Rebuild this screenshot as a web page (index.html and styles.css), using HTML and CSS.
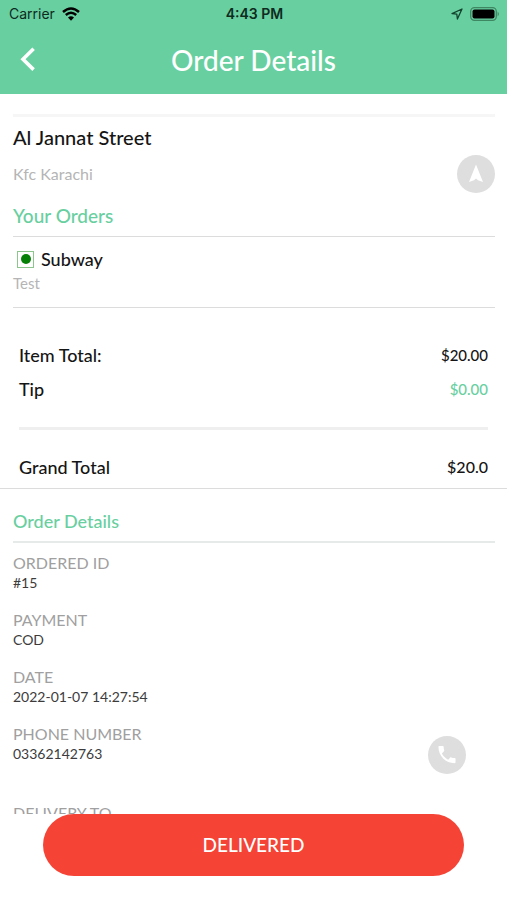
FILE: index.html
```html
<!DOCTYPE html>
<html lang="en">
<head>
<meta charset="utf-8">
<meta name="viewport" content="width=device-width, initial-scale=1">
<title>Order Details</title>
<link rel="stylesheet" href="styles.css">
</head>
<body>
<header class="top">
  <div class="status">
    <div class="status-left">
      <span>Carrier</span>
      <svg class="wifi" viewBox="0 0 18 14" aria-hidden="true">
        <path d="M1 5Q9-2 17 5M3.8 8Q9 3.6 14.2 8" fill="none" stroke="#000" stroke-width="2.5"/>
        <path d="M6 10.5Q9 7.9 12 10.5L9 13.7Z"/>
      </svg>
    </div>
    <span class="clock">4:43 PM</span>
    <div class="status-right">
      <svg class="locate" viewBox="0 0 12 12" aria-hidden="true">
        <path d="M11 1L1 5.6L5.8 6.2L6.4 11Z" fill="none" stroke="#12432d" stroke-width="1.3" stroke-linejoin="round"/>
      </svg>
      <svg class="battery" viewBox="0 0 30 14" aria-hidden="true">
        <rect x=".7" y=".7" width="25.6" height="12.6" rx="3.8" fill="none" stroke="#3f8663" stroke-width="1.3"/>
        <rect x="2.5" y="2.5" width="22" height="9" rx="2"/>
        <path d="M27.6 4.6Q30.2 7 27.6 9.4Z" fill="#3f8663"/>
      </svg>
    </div>
  </div>
  <div class="nav">
    <button class="back" type="button" aria-label="Back">
      <svg viewBox="0 0 16 26" aria-hidden="true"><path d="M13.6 1.8L3 12.2L13.6 22.6" fill="none" stroke="#fff" stroke-width="3.6"/></svg>
    </button>
    <h1>Order Details</h1>
  </div>
</header>

<main class="content">
  <section class="section place">
    <h2 class="name">Al Jannat Street</h2>
    <div class="place-row">
      <span class="muted">Kfc Karachi</span>
      <button class="round" type="button" aria-label="Navigate">
        <svg viewBox="0 0 38 38" aria-hidden="true"><path d="M19 9.5L26 27L21 25.2L19 23.5L17 25.2L12 27Z" fill="#fff"/></svg>
      </button>
    </div>
  </section>

  <section class="section orders">
    <h2 class="heading">Your Orders</h2>
    <div class="item">
      <div class="item-name"><span class="veg"></span><span>Subway</span></div>
      <p class="muted note">Test</p>
    </div>
  </section>

  <section class="totals">
    <div class="total"><span>Item Total:</span><span class="amount">$20.00</span></div>
    <div class="total"><span>Tip</span><span class="amount tip">$0.00</span></div>
    <div class="total grand"><span>Grand Total</span><span class="amount">$20.0</span></div>
  </section>

  <section class="section details">
    <h2 class="heading">Order Details</h2>
    <dl class="list">
      <div><dt>ORDERED ID</dt><dd>#15</dd></div>
      <div><dt>PAYMENT</dt><dd>COD</dd></div>
      <div><dt>DATE</dt><dd>2022-01-07 14:27:54</dd></div>
      <div class="phone">
        <div><dt>PHONE NUMBER</dt><dd>03362142763</dd></div>
        <div class="call">
          <button class="round" type="button" aria-label="Call">
            <svg viewBox="0 0 38 38" aria-hidden="true"><path transform="translate(7.6 7.2) scale(.95)" d="M6.62 10.79c1.44 2.83 3.76 5.14 6.59 6.59l2.2-2.2c.27-.27.67-.36 1.02-.24 1.12.37 2.33.57 3.57.57.55 0 1 .45 1 1V20c0 .55-.45 1-1 1-9.39 0-17-7.61-17-17 0-.55.45-1 1-1h3.5c.55 0 1 .45 1 1 0 1.25.2 2.45.57 3.57.11.35.03.74-.25 1.02l-2.2 2.2z" fill="#fff"/></svg>
          </button>
        </div>
      </div>
      <div class="delivery"><dt>DELIVERY TO</dt></div>
    </dl>
  </section>
</main>

<footer class="footer">
  <button class="deliver" type="button">DELIVERED</button>
</footer>
</body>
</html>
```
FILE: styles.css
```css
* { box-sizing: border-box; }

body {
  margin: 0;
  height: 100vh;
  display: flex;
  flex-direction: column;
  background: #fff;
  color: #151515;
  font-family: Lato, "Open Sans", sans-serif;
  font-size: 18px;
  font-weight: 500;
  line-height: 24px;
}

h1, h2, p, dl, dd { margin: 0; font-weight: inherit; }
button { border: 0; padding: 0; font: inherit; cursor: pointer; }
svg { display: block; }

.top { flex: none; background: #68cfa0; }

.status {
  display: grid;
  grid-template-columns: 1fr auto 1fr;
  align-items: center;
  height: 28px;
  padding: 0 7px 0 9px;
  color: #0d2b1e;
  font-family: Inter, sans-serif;
  font-size: 14px;
  font-weight: 400;
}
.status-left, .status-right { display: flex; align-items: center; gap: 7px; }
.status-right { justify-content: flex-end; }
.clock { font-weight: 600; }
.wifi { width: 18px; height: 14px; }
.locate { width: 12px; height: 12px; }
.battery { width: 30px; height: 14px; }

.nav {
  display: grid;
  grid-template-columns: 40px 1fr 40px;
  align-items: center;
  height: 66px;
  padding-bottom: 2px;
  color: #fff;
}
.nav h1 { font-size: 28px; line-height: 32px; text-align: center; }
.back { padding-left: 20px; background: none; }
.back svg { width: 16px; height: 26px; }

.content { flex: 1; min-height: 0; overflow: auto; scrollbar-width: none; }
.section { padding: 0 12px 0 13px; }

.place { padding-top: 20px; }
.name { padding: 8px 0 6px; border-top: 3px solid #f6f6f6; font-size: 20px; }
.place-row { display: flex; justify-content: space-between; align-items: center; }
.muted { color: #b5b5b5; font-size: 16px; font-weight: 400; line-height: 20px; }
.note { font-size: 15px; }

.round {
  width: 38px;
  height: 38px;
  border-radius: 50%;
  background: #dedede;
}

.heading { padding-bottom: 8px; color: #68cfa0; font-size: 19px; }
.orders { padding-top: 11px; }
.item { padding: 10px 0 14px; border: 1px solid #dcdcdc; border-width: 1px 0; }
.item-name { display: flex; align-items: center; gap: 7px; margin: 0 0 2px 4px; }
.veg {
  display: grid;
  place-items: center;
  width: 17px;
  height: 17px;
  border: 1px solid #8cc68c;
}
.veg::before { content: ""; width: 10px; height: 10px; border-radius: 50%; background: #078007; }

.totals {
  display: grid;
  gap: 10px;
  padding: 35px 19px 9px;
  border-bottom: 1px solid #dcdcdc;
}
.total { display: flex; justify-content: space-between; }
.amount { font-size: 15px; }
.tip { color: #68cfa0; }
.grand { margin-top: 16px; padding-top: 25px; border-top: 3px solid #efefef; }
.grand .amount { font-size: 16px; }

.details { padding-top: 20px; }
.details .heading { font-size: 18px; }
.list {
  display: grid;
  gap: 17px;
  padding-top: 10px;
  border-top: 2px solid #e6eae8;
  font-size: 16px;
  font-weight: 400;
  line-height: 20px;
}
.list dt { color: #a0a0a0; }
.list dd { color: #3c3c3c; font-size: 14px; }
.phone { display: flex; justify-content: space-between; }
.call { padding: 12px 29px 0 0; }
.delivery { margin-top: 8px; }

.footer { flex: none; padding: 0 43px 24px; }
.deliver {
  display: block;
  width: 100%;
  height: 62px;
  border-radius: 31px;
  background: #f54336;
  color: #fff;
  font-size: 19px;
}
```
